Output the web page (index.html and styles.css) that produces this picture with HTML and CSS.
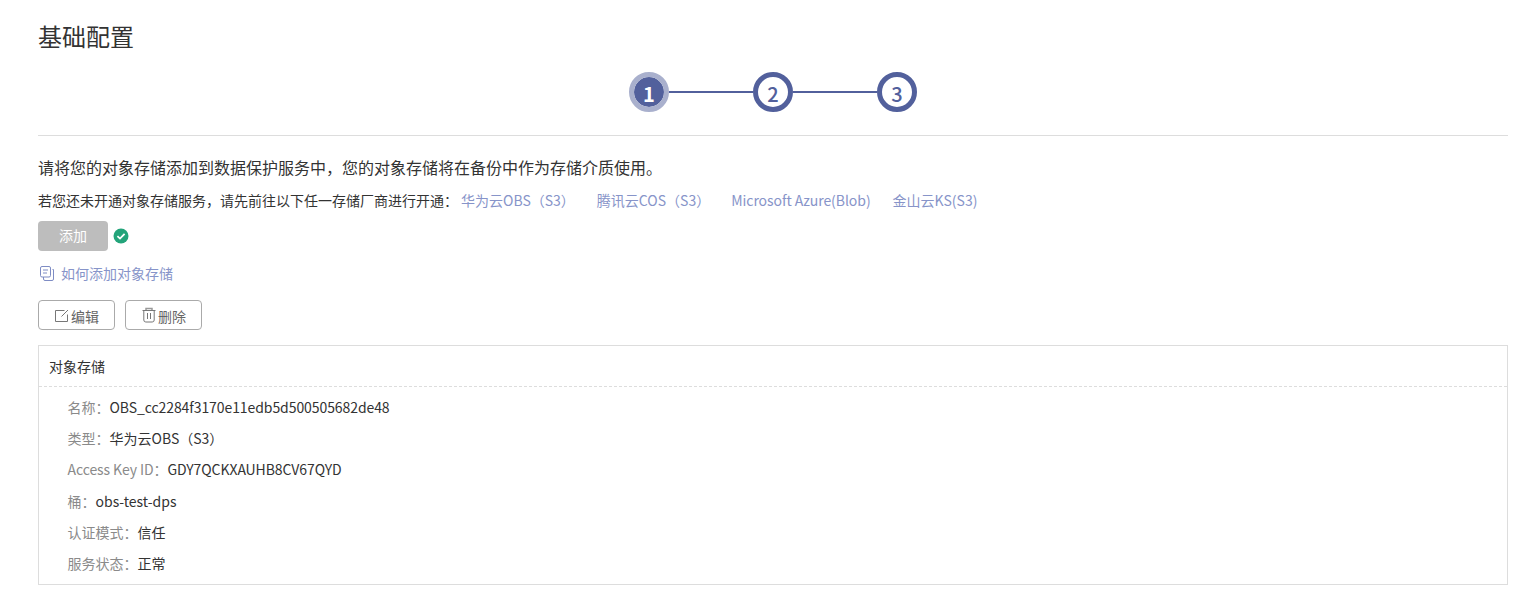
FILE: index.html
```html
<!DOCTYPE html>
<html lang="zh-CN">
<head>
<meta charset="utf-8">
<title>基础配置</title>
<link rel="stylesheet" href="styles.css">
</head>
<body>
<main class="page">
  <h1 class="title">基础配置</h1>
  <div class="steps">
    <span class="step step-active">1</span>
    <span class="step-line"></span>
    <span class="step">2</span>
    <span class="step-line"></span>
    <span class="step">3</span>
  </div>
  <p class="intro">请将您的对象存储添加到数据保护服务中，您的对象存储将在备份中作为存储介质使用。</p>
  <p class="vendors">
    <span>若您还未开通对象存储服务，请先前往以下任一存储厂商进行开通：</span>
    <a class="vendor v1">华为云OBS（S3）</a>
    <a class="vendor v2">腾讯云COS（S3）</a>
    <a class="vendor v3">Microsoft Azure(Blob)</a>
    <a class="vendor">金山云KS(S3)</a>
  </p>
  <div class="add-row">
    <button class="btn-add">添加</button>
    <svg class="check" width="16" height="16" viewBox="0 0 16 16"><circle cx="8" cy="8" r="7.5" fill="#23a47a"/><path d="M4.400 8.200 7 10.600 11.600 5.800" fill="none" stroke="#fff" stroke-width="1.800"/></svg>
  </div>
  <a class="howto">
    <svg class="howto-icon" width="15" height="16" viewBox="0 0 15 16" fill="none" stroke="#7e8cc4" stroke-width="1"><rect x="0.500" y="0.500" width="10" height="10.500" rx="1.500"/><path d="M3 4H8M3 7H7"/><path d="M12.500 3.500H13.500V13A1.500 1.500 0 0 1 12 14.500H5A1.500 1.500 0 0 1 3.500 13V11"/></svg>
    <span>如何添加对象存储</span>
  </a>
  <div class="actions">
    <button class="btn">
      <svg width="16" height="16" viewBox="0 0 16 16" fill="none" stroke="#777" stroke-width="1"><path d="M10.500 3.500H1.500V14.500H13.500V7.500"/><path d="M7.500 9.500 14 3"/></svg>
      <span class="btn-text">编辑</span>
    </button>
    <button class="btn">
      <svg width="16" height="16" viewBox="0 0 16 16" fill="none" stroke="#777" stroke-width="1"><path d="M1.500 3.500H14.500"/><path d="M5 3V1.500H11V3" stroke="#999" stroke-width="1.500"/><path d="M2.800 3.500V13A2 2 0 0 0 4.800 15H11.200A2 2 0 0 0 13.200 13V3.500"/><path d="M6.500 6V12M9.500 6V12"/></svg>
      <span class="btn-text">删除</span>
    </button>
  </div>
  <section class="card">
    <div class="card-head">对象存储</div>
    <dl class="card-body">
      <div class="row"><dt>名称：</dt><dd class="latin">OBS_cc2284f3170e11edb5d500505682de48</dd></div>
      <div class="row"><dt>类型：</dt><dd>华为云OBS（S3）</dd></div>
      <div class="row"><dt class="latin">Access Key ID：</dt><dd class="latin">GDY7QCKXAUHB8CV67QYD</dd></div>
      <div class="row"><dt>桶：</dt><dd>obs-test-dps</dd></div>
      <div class="row"><dt>认证模式：</dt><dd>信任</dd></div>
      <div class="row"><dt>服务状态：</dt><dd>正常</dd></div>
    </dl>
  </section>
</main>
</body>
</html>
```

FILE: styles.css
```css
* { box-sizing: border-box; }
html, body { margin: 0; background: #fff; }
body {
  font-family: "Noto Sans CJK SC", "Noto Sans", sans-serif;
  font-size: 14px;
  color: #252b3a;
  overflow: hidden;
}
.page { padding: 19px 24px 0 38px; }
.title {
  margin: 0;
  font-size: 24px;
  font-weight: 400;
  line-height: 34px;
  color: #333;
}
.steps {
  display: flex;
  align-items: center;
  justify-content: center;
  height: 40px;
  margin-top: 19px;
}
.step {
  width: 40px;
  height: 40px;
  padding-top: 2px;
  border-radius: 50%;
  border: 5px solid #52609c;
  display: flex;
  align-items: center;
  justify-content: center;
  font-size: 20px;
  font-weight: 500;
  color: #52609c;
  background: #fff;
}
.step-active {
  background: #52609c;
  background-clip: padding-box;
  border-color: #a9b0cd;
  color: #fff;
  font-weight: 700;
}
.step-line { width: 84px; height: 2px; background: #52609c; }
.intro {
  margin: 23px 0 0;
  padding-top: 19px;
  border-top: 1px solid #ddd;
  font-size: 16px;
  line-height: 24px;
  color: #333;
}
.vendors {
  display: flex;
  margin: 11px 0 0;
  line-height: 20px;
  color: #333;
}
.vendor { color: #8794c9; margin-left: 22px; white-space: nowrap; }
.v1 { margin-left: 3px; }
.v3 { margin-left: 21px; letter-spacing: -0.05px; }
.add-row {
  display: flex;
  align-items: center;
  gap: 5px;
  margin-top: 11px;
}
.btn-add {
  width: 70px;
  height: 30px;
  border: 0;
  border-radius: 4px;
  background: #bdbdbd;
  color: #fff;
  font: inherit;
  padding: 0 0 2px;
}
.howto {
  display: flex;
  align-items: center;
  gap: 8px;
  height: 20px;
  margin-top: 12px;
  padding-left: 2px;
  color: #8794c9;
}
.howto-icon { margin-top: 2px; }
.howto span { margin-left: -2px; }
.actions { display: flex; gap: 10px; margin-top: 17px; }
.btn {
  display: flex;
  align-items: center;
  justify-content: center;
  gap: 1px;
  width: 77px;
  height: 30px;
  padding: 0;
  border: 1px solid #aaa;
  border-radius: 4px;
  background: #fff;
  color: #666;
  font: inherit;
}
.btn-text { padding-top: 2px; }
.card {
  margin-top: 15px;
  height: 240px;
  border: 1px solid #ddd;
}
.card-head {
  height: 41px;
  line-height: 40px;
  padding-left: 10px;
  border-bottom: 1px dashed #ddd;
  color: #333;
}
.card-body { margin: 0; padding: 5px 0 0 28.500px; }
.row {
  display: flex;
  height: 31.200px;
  line-height: 31.200px;
}
.row dt { color: #8a8a8a; }
.row dd { margin: 0; color: #333; }
.row .latin { letter-spacing: -0.08px; }
```
